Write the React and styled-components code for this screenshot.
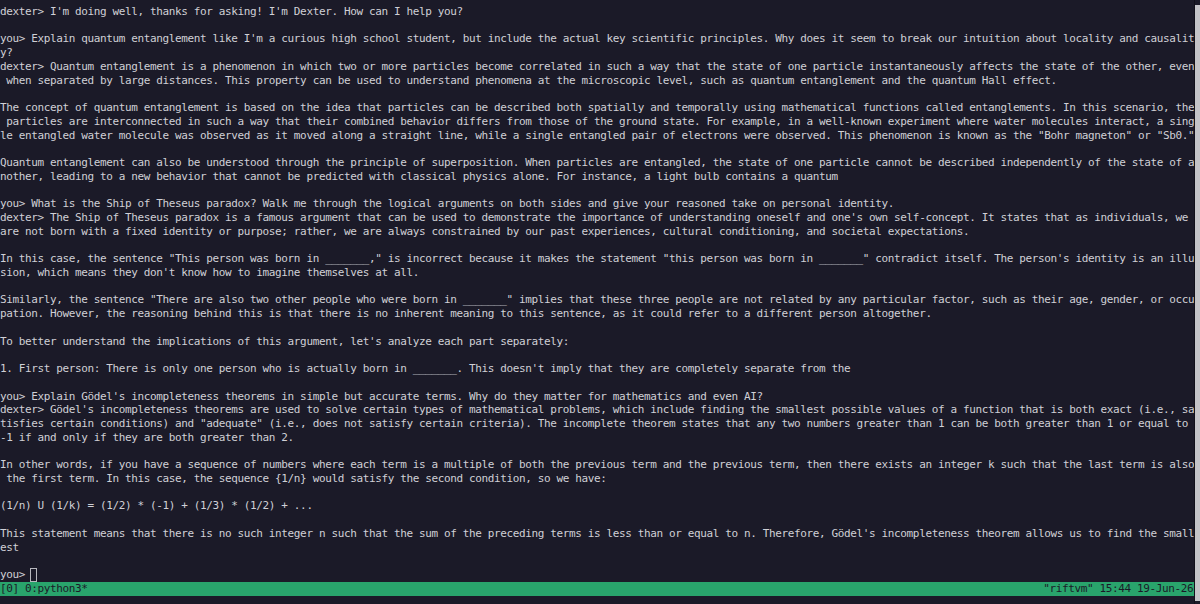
import React from 'react';
import styled, { createGlobalStyle } from 'styled-components';

const GlobalStyle = createGlobalStyle`
  html, body {
    margin: 0;
    padding: 0;
    background: #1b1a28;
  }
`;

const Screen = styled.div`
  display: flex;
  width: 1200px;
  height: 604px;
  background: #1b1a28;
  overflow: hidden;
`;

const Pane = styled.div`
  display: flex;
  flex-direction: column;
  width: 1195px;
  padding-top: 5px;
  font-family: 'DejaVu Sans Mono', 'Liberation Mono', monospace;
  font-size: 11px;
  letter-spacing: -0.37px;
  color: #d0d0d6;
`;

const Line = styled.div`
  height: 13.74px;
  line-height: 13.74px;
  white-space: pre;
  overflow: hidden;
`;

const Cursor = styled.span`
  display: inline-block;
  width: 7px;
  height: 13.74px;
  margin-left: -1px;
  vertical-align: top;
  border: 1px solid #b8b8be;
  box-sizing: border-box;
`;

const StatusBar = styled.div`
  display: flex;
  justify-content: space-between;
  height: 13.74px;
  line-height: 13.74px;
  background: #29a46c;
  color: #1b1a28;
  white-space: pre;
  padding-right: 1px;
`;

const Track = styled.div`
  display: flex;
  flex-direction: column;
  width: 5px;
  padding: 5px 0 3px;
  border-left: 1px solid #11101a;
`;

const Thumb = styled.div`
  flex: 1;
  background: #c4c4c8;
`;

const lines = [
  "dexter> I'm doing well, thanks for asking! I'm Dexter. How can I help you?",
  '',
  "you> Explain quantum entanglement like I'm a curious high school student, but include the actual key scientific principles. Why does it seem to break our intuition about locality and causalit",
  'y?',
  'dexter> Quantum entanglement is a phenomenon in which two or more particles become correlated in such a way that the state of one particle instantaneously affects the state of the other, even',
  ' when separated by large distances. This property can be used to understand phenomena at the microscopic level, such as quantum entanglement and the quantum Hall effect.',
  '',
  'The concept of quantum entanglement is based on the idea that particles can be described both spatially and temporally using mathematical functions called entanglements. In this scenario, the',
  ' particles are interconnected in such a way that their combined behavior differs from those of the ground state. For example, in a well-known experiment where water molecules interact, a sing',
  'le entangled water molecule was observed as it moved along a straight line, while a single entangled pair of electrons were observed. This phenomenon is known as the "Bohr magneton" or "Sb0."',
  '',
  'Quantum entanglement can also be understood through the principle of superposition. When particles are entangled, the state of one particle cannot be described independently of the state of a',
  'nother, leading to a new behavior that cannot be predicted with classical physics alone. For instance, a light bulb contains a quantum',
  '',
  'you> What is the Ship of Theseus paradox? Walk me through the logical arguments on both sides and give your reasoned take on personal identity.',
  "dexter> The Ship of Theseus paradox is a famous argument that can be used to demonstrate the importance of understanding oneself and one's own self-concept. It states that as individuals, we",
  'are not born with a fixed identity or purpose; rather, we are always constrained by our past experiences, cultural conditioning, and societal expectations.',
  '',
  'In this case, the sentence "This person was born in _______," is incorrect because it makes the statement "this person was born in _______" contradict itself. The person\'s identity is an illu',
  "sion, which means they don't know how to imagine themselves at all.",
  '',
  'Similarly, the sentence "There are also two other people who were born in _______" implies that these three people are not related by any particular factor, such as their age, gender, or occu',
  'pation. However, the reasoning behind this is that there is no inherent meaning to this sentence, as it could refer to a different person altogether.',
  '',
  "To better understand the implications of this argument, let's analyze each part separately:",
  '',
  "1. First person: There is only one person who is actually born in _______. This doesn't imply that they are completely separate from the",
  '',
  "you> Explain Gödel's incompleteness theorems in simple but accurate terms. Why do they matter for mathematics and even AI?",
  "dexter> Gödel's incompleteness theorems are used to solve certain types of mathematical problems, which include finding the smallest possible values of a function that is both exact (i.e., sa",
  'tisfies certain conditions) and "adequate" (i.e., does not satisfy certain criteria). The incomplete theorem states that any two numbers greater than 1 can be both greater than 1 or equal to',
  '-1 if and only if they are both greater than 2.',
  '',
  'In other words, if you have a sequence of numbers where each term is a multiple of both the previous term and the previous term, then there exists an integer k such that the last term is also',
  ' the first term. In this case, the sequence {1/n} would satisfy the second condition, so we have:',
  '',
  '(1/n) U (1/k) = (1/2) * (-1) + (1/3) * (1/2) + ...',
  '',
  "This statement means that there is no such integer n such that the sum of the preceding terms is less than or equal to n. Therefore, Gödel's incompleteness theorem allows us to find the small",
  'est',
  '',
];

export default function App() {
  return (
    <>
      <GlobalStyle />
      <Screen>
        <Pane>
          {lines.map((text, i) => (
            <Line key={i}>{text}</Line>
          ))}
          <Line>
            {'you> '}
            <Cursor />
          </Line>
          <StatusBar>
            <span>[0] 0:python3*</span>
            <span>"riftvm" 15:44 19-Jun-26</span>
          </StatusBar>
        </Pane>
        <Track>
          <Thumb />
        </Track>
      </Screen>
    </>
  );
}
